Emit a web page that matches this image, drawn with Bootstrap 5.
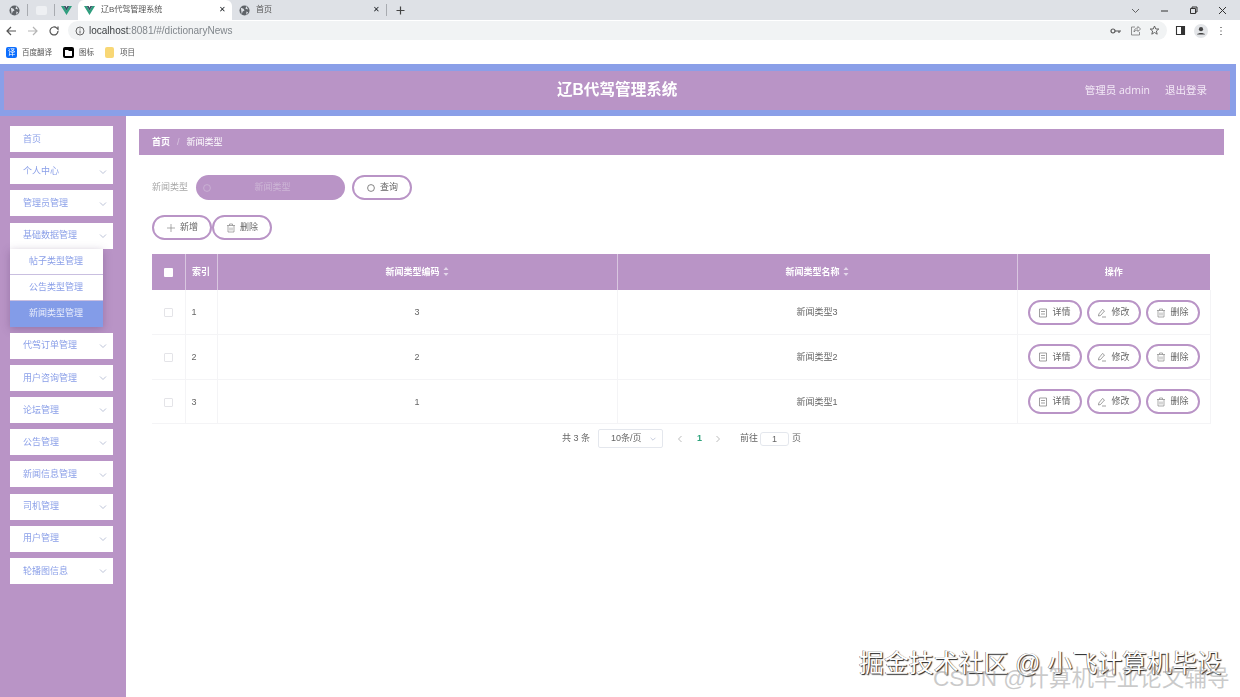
<!DOCTYPE html>
<html lang="zh-CN">

<head>
  <meta charset="UTF-8" />
  <title>辽B代驾管理系统</title>
  <link href="https://cdn.jsdelivr.net/npm/bootstrap@5.3.3/dist/css/bootstrap.min.css" rel="stylesheet" />
  <style>
    :root {
      --roxo: #b994c6;
      --azul: #8a9fe8;
    }

    html,
    body {
      height: 100%;
      overflow: hidden;
    }

    body {
      font-family: "Liberation Sans", "Noto Sans CJK SC", sans-serif;
      font-size: 9px;
      color: #606266;
      background: #fff;
      position: relative;
    }

    /* barra do navegador */
    .tabstrip {
      height: 20px;
      background: #dee1e6;
      color: #555;
      font-size: 8px;
      padding-left: 1px;
    }

    .pintab {
      width: 26px;
      height: 20px;
    }

    .pintab-end {
      width: 23px;
    }

    .tabsep {
      width: 1px;
      height: 12px;
      background: #a8abb0;
    }

    .tabon {
      width: 154px;
      height: 20px;
      background: #fff;
      border-radius: 6px 6px 0 0;
      padding: 0 6px 0 6px;
      gap: 6px;
    }

    .taboff {
      width: 154px;
      height: 20px;
      padding: 0 6px 0 7px;
      gap: 6px;
    }

    .wincontrols {
      gap: 18px;
      padding-right: 12px;
    }

    .toolbar {
      height: 21px;
      background: #fff;
    }

    .omnibox {
      width: 1099px;
      height: 19px;
      background: #f1f3f4;
      border-radius: 10px;
      font-size: 10px;
      color: #80868b;
      padding: 0 7px;
    }

    .omnibox b {
      font-weight: 400;
      color: #3c4043;
    }

    .bookmarks {
      height: 23px;
      font-size: 7.5px;
      color: #555;
      padding-left: 6px;
    }

    .bmicon {
      width: 11px;
      height: 11px;
      border-radius: 2px;
      margin-right: 5px;
    }

    .bmsecond {
      margin-left: 11px;
    }

    .bmfolder {
      width: 9px;
      background: #f8d775;
      margin-left: 11px;
      margin-right: 6px;
    }

    /* cabeçalho do sistema */
    .topo {
      height: 52px;
      width: 1236px;
      background: var(--roxo);
      border: solid var(--azul);
      border-width: 7px 6px 6px 4px;
      color: #fff;
    }

    .topo h1 {
      font-size: 15.6px;
      font-weight: 700;
      margin: 0;
      padding-left: 553px;
    }

    .toporight {
      font-family: "Open Sans", "Noto Sans CJK SC", sans-serif;
      font-size: 10.5px;
      gap: 15px;
      padding-right: 23px;
      color: #f3e9f6;
    }

    .sidebar {
      width: 126px;
      height: 581px;
      background: var(--roxo);
      padding: 10px 13px 0 10px;
      flex-shrink: 0;
    }

    .menuitem {
      height: 26px;
      background: #fff;
      color: #8a9fe8;
      padding: 1px 5px 0 13px;
      margin-bottom: 6.2px;
    }

    .submenu {
      width: 93px;
      margin-top: -6.2px;
      margin-bottom: 6px;
      background: #fff;
      box-shadow: 0 2px 8px rgba(90, 60, 110, .35);
    }

    .submenu div {
      height: 26px;
      color: #8a9fe8;
      padding: 1px 0 0 19px;
      display: flex;
      align-items: center;
      border-bottom: 1px solid #c9bfe0;
    }

    .submenu .subactive {
      background: #839ce8;
      color: #e8ecfb;
      border-bottom: 0;
      padding-top: 0;
    }

    .mainarea {
      padding: 13px 16px 0 13px;
      flex: 1;
    }

    .crumbbar {
      height: 26px;
      background: var(--roxo);
      color: #fff;
      padding: 2px 0 0 13px;
      gap: 7px;
    }

    .crumbbar b {
      font-weight: 700;
    }

    .crumbbar i {
      font-style: normal;
      color: #d9c6e0;
    }

    .pad13 {
      padding-left: 13px;
    }

    .searchrow {
      margin-top: 20px;
      height: 25px;
    }

    .fieldlabel {
      width: 44px;
      color: #a8a8a8;
    }

    .fakeinput {
      width: 149px;
      height: 25px;
      background: var(--roxo);
      border-radius: 13px;
      color: #cdb6d6;
      padding-left: 6px;
      margin-right: 7px;
    }

    .fakeinput span {
      flex: 1;
      text-align: center;
      padding-right: 12px;
    }

    .btnpill {
      height: 25px;
      border: 2px solid var(--roxo);
      border-radius: 13px;
      background: #fff;
      color: #666;
      font-size: 9px;
      padding: 1px 0 0;
      gap: 4px;
    }

    .btnwide {
      width: 60px;
    }

    .btnrow {
      width: 54px;
    }

    .actionsrow {
      margin-top: 15px;
      height: 25px;
    }

    .tablewrap {
      margin-top: 14px;
      margin-left: 13px;
      width: 1058px;
    }

    .gridtable {
      table-layout: fixed;
      width: 1058px;
      margin: 0;
      font-size: 9px;
    }

    .colcheck {
      width: 33px;
    }

    .colindex {
      width: 32px;
    }

    .coltext {
      width: 400px;
    }

    .colops {
      width: 193px;
    }

    .gridtable th {
      height: 36px;
      padding: 2px 0 0;
      background: var(--roxo);
      color: #fff;
      text-align: center;
      vertical-align: middle;
      font-weight: 700;
      border: 0;
      border-right: 1px solid #d9c6e0;
    }

    .gridtable th:last-child {
      border-right: 0;
    }

    .gridtable td {
      height: 44.6px;
      padding: 2px 0 0;
      text-align: center;
      vertical-align: middle;
      color: #666;
      border: 0;
      border-bottom: 1px solid #f4f4f6;
      border-right: 1px solid #f4f4f6;
    }

    .gridtable td.cellindex {
      text-align: left;
      padding-left: 6px;
    }

    .gridtable td.cellops {
      padding-top: 0;
    }

    .tickhead {
      display: inline-block;
      width: 9px;
      height: 9px;
      background: #fff;
      border-radius: 1px;
      vertical-align: middle;
    }

    .tickrow {
      display: inline-block;
      width: 9px;
      height: 9px;
      background: #fff;
      border: 1px solid #e4e4e8;
      border-radius: 1px;
      vertical-align: middle;
    }

    .rowbtns {
      gap: 5px;
    }

    .sortarrows {
      display: inline-block;
      vertical-align: -1px;
      margin-left: 3px;
    }

    .pagerbar {
      height: 29px;
      margin-left: 13px;
      width: 1058px;
      font-size: 9px;
      color: #666;
      padding-left: 410px;
    }

    .pagesize {
      width: 65px;
      height: 19px;
      border: 1px solid #e4e7ed;
      border-radius: 2px;
      margin: 0 13px 0 8px;
      padding: 0 5px 0 12px;
    }

    .pagego {
      width: 29px;
      height: 14px;
      border: 1px solid #e4e7ed;
      border-radius: 3px;
      text-align: center;
      line-height: 12px;
      margin: 0 3px 0 2px;
    }

    .pagenum {
      color: #2fa37c;
      font-weight: 700;
      margin: 0 12px 0 13px;
    }

    .pagelabel {
      margin-left: 18px;
    }

    /* marcas d'água por cima da página */
    .mark1 {
      position: absolute;
      left: 859px;
      top: 648px;
      font-size: 24.9px;
      line-height: 30px;
      color: #fff;
      text-shadow: 1px 1px 1px #222, -.5px -.5px 0 #666;
      white-space: nowrap;
    }

    .mark2 {
      position: absolute;
      left: 933px;
      top: 664px;
      font-size: 22.6px;
      line-height: 30px;
      color: rgba(150, 150, 150, .5);
      white-space: nowrap;
    }

    .softblur {
      filter: blur(.5px);
    }
  </style>
</head>

<body>
  <svg width="0" height="0" class="position-absolute">
    <defs>
      <symbol id="i-globe" viewBox="0 0 12 12">
        <circle cx="6" cy="6" r="5.5" fill="#5f6368" />
        <path d="M2 3l3 1 1 2-2 1-1 3M8 1l-1 3 3 1M8 7l2 1-2 3z" fill="#dee1e6" />
      </symbol>
      <symbol id="i-vue" viewBox="0 0 12 12">
        <path d="M0 1h3l3 5 3-5h3L6 11z" fill="#2f9e7e" />
        <path d="M3 1h2l1 2 1-2h2L6 6z" fill="#35495e" />
      </symbol>
      <symbol id="i-chev" viewBox="0 0 10 10">
        <path d="M2 3.5l3 3 3-3" fill="none" stroke="#a9b2cc" stroke-width=".8" />
      </symbol>
      <symbol id="i-detail" viewBox="0 0 10 10">
        <path d="M1.5 1h7v8h-7zM3 3.5h4M3 6h4" fill="none" stroke="#777" stroke-width=".7" />
      </symbol>
      <symbol id="i-edit" viewBox="0 0 10 10">
        <path d="M5.5 1.5l2 1.5-4 4.5-2 .5.3-2zM5 9h4" fill="none" stroke="#777" stroke-width=".7" />
      </symbol>
      <symbol id="i-trash" viewBox="0 0 10 10">
        <path d="M1 2.5h8M3.5 2.5V1h3v1.5M2 2.5V9h6V2.5M4 4.5v3M6 4.5v3" fill="none" stroke="#888" stroke-width=".7" />
      </symbol>
      <symbol id="i-search" viewBox="0 0 10 10">
        <circle cx="5" cy="5" r="3.4" fill="none" stroke="#666" stroke-width=".8" />
      </symbol>
    </defs>
  </svg>

  <div class="softblur">
    <!-- barra de abas -->
    <div class="tabstrip d-flex align-items-center">
      <div class="pintab d-flex align-items-center justify-content-center"><svg width="11" height="11"><use href="#i-globe" /></svg></div>
      <div class="tabsep"></div>
      <div class="pintab d-flex align-items-center justify-content-center"><svg width="11" height="9"><rect width="11" height="9" rx="2" fill="#eef0f3" /></svg></div>
      <div class="tabsep"></div>
      <div class="pintab pintab-end d-flex align-items-center justify-content-center"><svg width="11" height="11"><use href="#i-vue" /></svg></div>
      <div class="tabon d-flex align-items-center">
        <svg width="11" height="11"><use href="#i-vue" /></svg>
        <span class="flex-grow-1">辽B代驾管理系统</span>
        <span class="text-dark">✕</span>
      </div>
      <div class="taboff d-flex align-items-center">
        <svg width="11" height="11"><use href="#i-globe" /></svg>
        <span class="flex-grow-1">首页</span>
        <span class="text-dark">✕</span>
      </div>
      <div class="tabsep"></div>
      <svg class="ms-2" width="11" height="11" viewBox="0 0 11 11"><path d="M5.5 1.5v8M1.5 5.5h8" stroke="#444" stroke-width="1.2" /></svg>
      <div class="wincontrols d-flex align-items-center ms-auto">
        <svg width="11" height="11" viewBox="0 0 11 11"><path d="M2 4l3.500 3.500L9 4" fill="none" stroke="#555" stroke-width=".9" /></svg>
        <svg width="11" height="11" viewBox="0 0 11 11"><path d="M2 6h7" stroke="#333" stroke-width="1" /></svg>
        <svg width="11" height="11" viewBox="0 0 11 11"><path d="M2.500 3.500h5v5h-5zM4 3.500V2h5v5H7.500" fill="none" stroke="#333" stroke-width="1" /></svg>
        <svg width="11" height="11" viewBox="0 0 11 11"><path d="M2 2l7 7M9 2l-7 7" stroke="#333" stroke-width="1" /></svg>
      </div>
    </div>

    <!-- barra de endereço -->
    <div class="toolbar d-flex align-items-center">
      <svg class="ms-1" width="14" height="14" viewBox="0 0 14 14"><path d="M12 7H3M7 3L3 7l4 4" fill="none" stroke="#555" stroke-width="1.2" /></svg>
      <svg class="ms-2" width="14" height="14" viewBox="0 0 14 14"><path d="M2 7h9M7 3l4 4-4 4" fill="none" stroke="#b5b5b5" stroke-width="1.2" /></svg>
      <svg class="ms-2" width="12" height="12" viewBox="0 0 12 12"><path d="M10 6a4 4 0 1 1-1.200-2.900L10 4.300V1.500" fill="none" stroke="#555" stroke-width="1.200" /></svg>
      <div class="omnibox d-flex align-items-center ms-2">
        <svg class="me-1" width="10" height="10" viewBox="0 0 10 10"><circle cx="5" cy="5" r="4" fill="none" stroke="#555" stroke-width=".9" /><path d="M5 4.500v3M5 2.500v1" stroke="#555" stroke-width=".9" /></svg>
        <span><b>localhost</b>:8081/#/dictionaryNews</span>
        <div class="d-flex align-items-center gap-2 ms-auto">
          <svg width="12" height="10" viewBox="0 0 12 10"><circle cx="3" cy="5" r="2" fill="none" stroke="#555" stroke-width="1.200" /><path d="M5 5h6M9 5v2" stroke="#555" stroke-width="1.200" /></svg>
          <svg width="11" height="11" viewBox="0 0 11 11"><path d="M5 2H1.500v8h8V7M4 7c0-3 2-4 4-4V1.500L10.500 4 8 6.500V5C6.500 5 5 5.500 4 7z" fill="none" stroke="#666" stroke-width=".7" /></svg>
          <svg width="11" height="11" viewBox="0 0 11 11"><path d="M5.500 1l1.300 3h3l-2.400 2 .8 3.200-2.700-1.700L2.800 9.200 3.600 6 1.200 4h3z" fill="none" stroke="#555" stroke-width=".9" /></svg>
        </div>
      </div>
      <svg class="ms-2" width="11" height="11" viewBox="0 0 11 11"><path d="M1.500 1.500h8v8h-8z" fill="none" stroke="#333" stroke-width="1.100" /><rect x="6" y="1.500" width="3.500" height="8" fill="#333" /></svg>
      <svg class="ms-2" width="14" height="14" viewBox="0 0 14 14"><circle cx="7" cy="7" r="7" fill="#e3e5e8" /><circle cx="7" cy="5.200" r="2.100" fill="#444" /><path d="M3 10.500c1-2 7-2 8 0z" fill="#444" /></svg>
      <svg class="ms-2" width="10" height="12" viewBox="0 0 10 12"><path d="M5 2v1M5 5.500v1M5 9v1" stroke="#555" stroke-width="1.300" /></svg>
    </div>

    <!-- favoritos -->
    <div class="bookmarks d-flex align-items-center">
      <span class="bmicon bg-primary text-white d-inline-flex align-items-center justify-content-center">译</span>
      <span>百度翻译</span>
      <span class="bmicon bmsecond bg-black d-inline-flex align-items-center justify-content-center"><svg width="7" height="6" viewBox="0 0 7 6"><path d="M0 0h3l1 1h3v5H0z" fill="#fff" /></svg></span>
      <span>图标</span>
      <span class="bmicon bmfolder"></span>
      <span>项目</span>
    </div>

    <header class="topo d-flex align-items-center justify-content-between">
      <h1>辽B代驾管理系统</h1>
      <div class="toporight d-flex">
        <span>管理员 admin</span>
        <span>退出登录</span>
      </div>
    </header>

    <div class="d-flex">
      <aside class="sidebar" id="menu"></aside>

      <main class="mainarea">
        <div class="crumbbar d-flex align-items-center">
          <b>首页</b><i>/</i><span>新闻类型</span>
        </div>

        <div class="searchrow pad13 d-flex align-items-center">
          <span class="fieldlabel">新闻类型</span>
          <div class="fakeinput d-flex align-items-center">
            <svg width="10" height="10" viewBox="0 0 10 10"><circle cx="5" cy="5" r="3.400" fill="none" stroke="#cdb6d6" stroke-width=".8" /></svg>
            <span>新闻类型</span>
          </div>
          <button type="button" class="btnpill btnwide d-flex align-items-center justify-content-center"><svg width="10" height="10"><use href="#i-search" /></svg>查询</button>
        </div>

        <div class="actionsrow pad13 d-flex">
          <button type="button" class="btnpill btnwide d-flex align-items-center justify-content-center"><svg width="10" height="10" viewBox="0 0 10 10"><path d="M5 1v8M1 5h8" stroke="#888" stroke-width=".7" /></svg>新增</button>
          <button type="button" class="btnpill btnwide d-flex align-items-center justify-content-center"><svg width="10" height="10"><use href="#i-trash" /></svg>删除</button>
        </div>

        <div class="tablewrap">
          <table class="table gridtable">
            <colgroup>
              <col class="colcheck" />
              <col class="colindex" />
              <col class="coltext" />
              <col class="coltext" />
              <col class="colops" />
            </colgroup>
            <thead>
              <tr>
                <th><span class="tickhead"></span></th>
                <th>索引</th>
                <th>新闻类型编码<svg class="sortarrows" width="6" height="9" viewBox="0 0 6 9"><path d="M3 0l2.500 3h-5zM3 9L.5 6h5z" fill="#e3d6e9" /></svg></th>
                <th>新闻类型名称<svg class="sortarrows" width="6" height="9" viewBox="0 0 6 9"><path d="M3 0l2.500 3h-5zM3 9L.5 6h5z" fill="#e3d6e9" /></svg></th>
                <th>操作</th>
              </tr>
            </thead>
            <tbody id="linhas"></tbody>
          </table>
        </div>

        <div class="pagerbar d-flex align-items-center">
          <span>共 3 条</span>
          <div class="pagesize d-flex align-items-center justify-content-between">
            <span>10条/页</span>
            <svg width="8" height="8"><use href="#i-chev" /></svg>
          </div>
          <svg width="8" height="10" viewBox="0 0 8 10"><path d="M5.500 2L2.500 5l3 3" fill="none" stroke="#aaa" stroke-width=".8" /></svg>
          <span class="pagenum">1</span>
          <svg width="8" height="10" viewBox="0 0 8 10"><path d="M2.500 2l3 3-3 3" fill="none" stroke="#aaa" stroke-width=".8" /></svg>
          <span class="pagelabel">前往</span>
          <span class="pagego">1</span>
          <span>页</span>
        </div>
      </main>
    </div>
  </div>

  <div class="mark1">掘金技术社区 @ 小飞计算机毕设</div>
  <div class="mark2">CSDN @计算机毕业论文辅导</div>

  <script>
    const itens = ['首页', '个人中心', '管理员管理', '基础数据管理', '代驾订单管理', '用户咨询管理', '论坛管理', '公告管理', '新闻信息管理', '司机管理', '用户管理', '轮播图信息'];
    const sub = ['帖子类型管理', '公告类型管理', '新闻类型管理'];

    document.getElementById('menu').innerHTML = itens.map((nome, i) => {
      const seta = i === 0 ? '' : '<svg width="10" height="10"><use href="#i-chev" /></svg>';
      let html = `<div class="menuitem d-flex align-items-center justify-content-between"><span>${nome}</span>${seta}</div>`;
      if (i === 3) {
        html += '<div class="submenu">' + sub.map((s, j) => `<div class="${j === 2 ? 'subactive' : ''}">${s}</div>`).join('') + '</div>';
      }
      return html;
    }).join('');

    const dados = [[1, 3, '新闻类型3'], [2, 2, '新闻类型2'], [3, 1, '新闻类型1']];
    document.getElementById('linhas').innerHTML = dados.map(d => `
      <tr>
        <td><span class="tickrow"></span></td>
        <td class="cellindex">${d[0]}</td>
        <td>${d[1]}</td>
        <td>${d[2]}</td>
        <td class="cellops">
          <div class="rowbtns d-flex justify-content-center">
            <button type="button" class="btnpill btnrow d-flex align-items-center justify-content-center"><svg width="10" height="10"><use href="#i-detail" /></svg>详情</button>
            <button type="button" class="btnpill btnrow d-flex align-items-center justify-content-center"><svg width="10" height="10"><use href="#i-edit" /></svg>修改</button>
            <button type="button" class="btnpill btnrow d-flex align-items-center justify-content-center"><svg width="10" height="10"><use href="#i-trash" /></svg>删除</button>
          </div>
        </td>
      </tr>`).join('');
  </script>
</body>

</html>
